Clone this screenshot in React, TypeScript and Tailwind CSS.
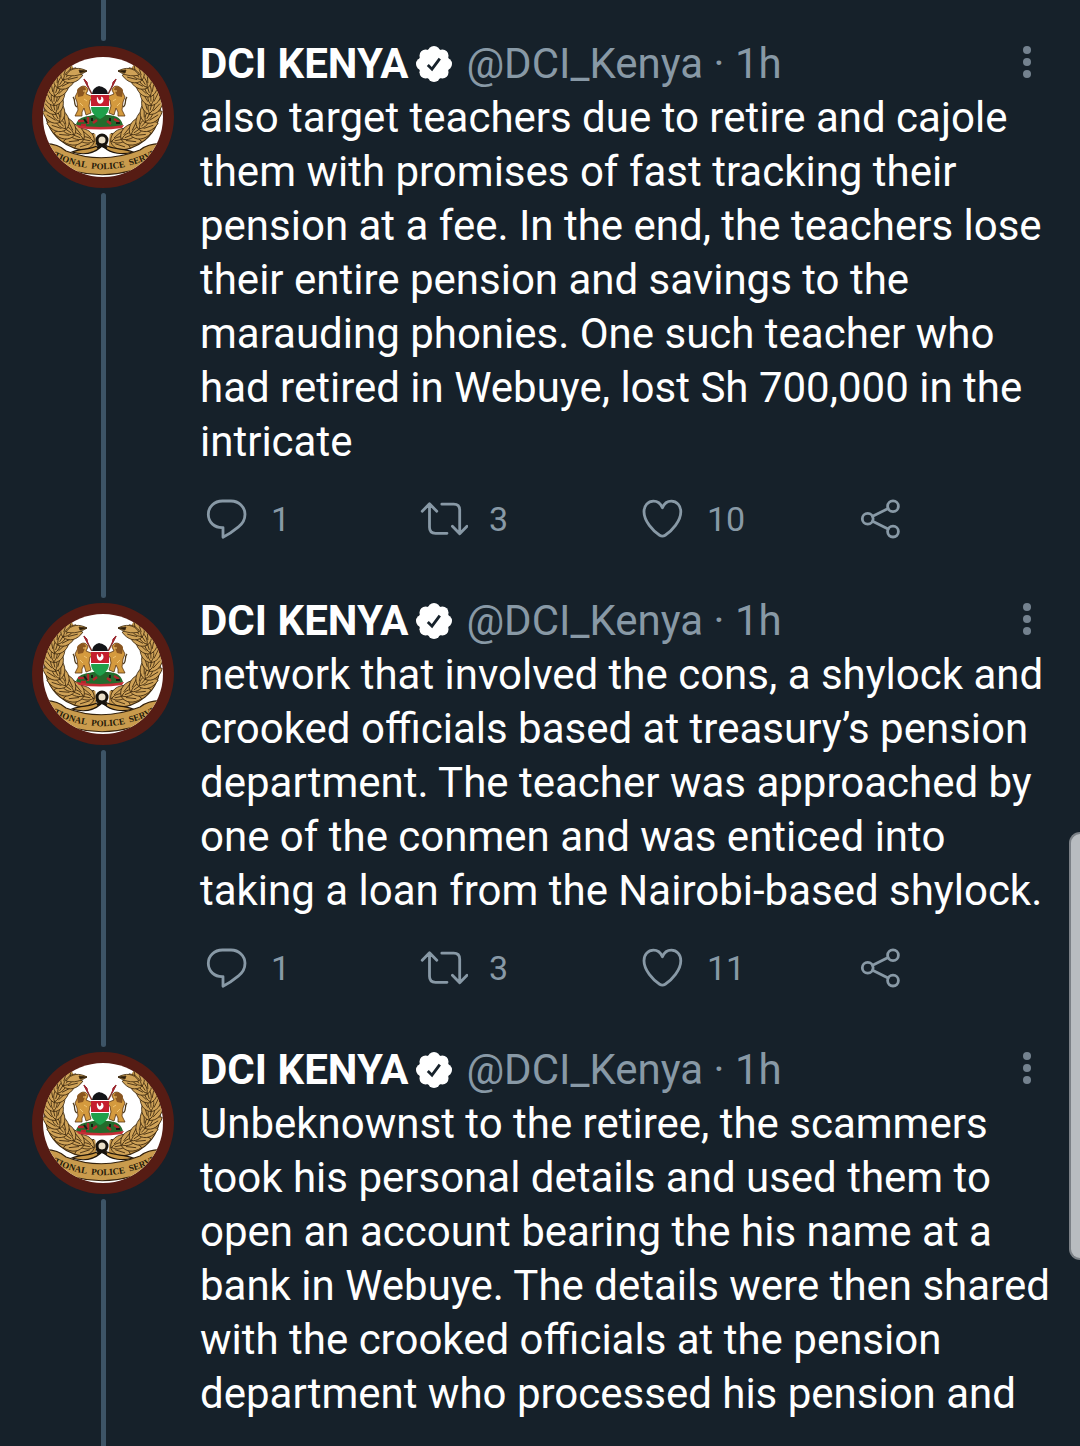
import { useId } from "react";

type Tweet = {
  id: number;
  text: string;
  replies?: number;
  retweets?: number;
  likes?: number;
};

const tweets: Tweet[] = [
  {
    id: 1,
    text: "also target teachers due to retire and cajole them with promises of fast tracking their pension at a fee. In the end, the teachers lose their entire pension and savings to the marauding phonies. One such teacher who had retired in Webuye, lost Sh 700,000 in the intricate",
    replies: 1,
    retweets: 3,
    likes: 10
  },
  {
    id: 2,
    text: "network that involved the cons, a shylock and crooked officials based at treasury’s pension department. The teacher was approached by one of the conmen and was enticed into taking a loan from the Nairobi-based shylock.",
    replies: 1,
    retweets: 3,
    likes: 11
  },
  {
    id: 3,
    text: "Unbeknownst to the retiree, the scammers took his personal details and used them to open an account bearing the his name at a bank in Webuye. The details were then shared with the crooked officials at the pension department who processed his pension and"
  }
];

// angles along one branch of the wreath, from the knot up to the tip
const branch = [14, 27, 40, 53, 66, 79, 92, 105, 118, 131];

function Branch() {
  return (
    <g fill="#cfa257" stroke="#3d290f" strokeWidth="0.8">
      <path d="M63 96C40 98 21 84 21 59C21 43 28 31 42 24" fill="none" stroke="#3d290f" strokeWidth="18" />
      <path d="M64 96C40 98 21 84 21 59C21 43 28 31 42 24" fill="none" stroke="#c4954a" strokeWidth="16" />
      {branch.map((deg) => {
        const a = (deg * Math.PI) / 180;
        const x = 70 - 48 * Math.sin(a);
        const y = 57 + 39 * Math.cos(a);
        const dir = (Math.atan2(-39 * Math.sin(a), -48 * Math.cos(a)) * 180) / Math.PI;
        return (
          <g key={deg} transform={`translate(${x} ${y}) rotate(${dir})`}>
            <path d="M-4 0C-3 -8 5 -12 14 -10C13 -4 6 0 -4 0ZM0 -3L9 -8" />
            <path d="M-4 0C-3 8 5 12 14 10C13 4 6 0 -4 0ZM0 3L9 8" />
            <path d="M-3 0C1 -4 9 -4 14 0C9 4 1 4 -3 0ZM0 0H9" />
          </g>
        );
      })}
      <path d="M34 29C39 21 48 21 55 25C49 29 42 31 34 29Z" />
      <path d="M47 24L55 25L48 27Z" fill="#2a1c0c" />
    </g>
  );
}

function Lion() {
  return (
    <g>
      <path
        d="M47 43C49 39 55 39 56 44L54 48L59 50L64 48L64 52L58 54L57 60L59 67L54 69L52 62L50 66L50 70L43 70L46 64L45 56L43 51Z"
        fill="#d49a3e"
        stroke="#5a3510"
        strokeWidth="0.8"
      />
      <path d="M45 44C47 40 52 39 54 43L51 50L46 51Z" fill="#8a5620" />
      <path d="M45 61C41 59 44 54 41 51" fill="none" stroke="#4a3617" strokeWidth="1.2" />
      <path d="M51 45H54M52 53L55 55M48 57L51 60" fill="none" stroke="#f1c673" strokeWidth="1" />
    </g>
  );
}

function Avatar() {
  const uid = useId();
  return (
    <svg viewBox="0 0 142 142" className="my-[5px] size-[142px] shrink-0" role="img" aria-label="DCI Kenya">
      <defs>
        <clipPath id={`${uid}clip`}>
          <circle cx="71" cy="71" r="60" />
        </clipPath>
        <path id={`${uid}arc`} d="M16 108Q71 139 128 107" />
      </defs>
      <circle cx="71" cy="71" r="71" fill="#561c14" />
      <circle cx="71" cy="71" r="60" fill="#fff" />
      <g clipPath={`url(#${uid}clip)`}>
        <Branch />
        <g transform="translate(141 0) scale(-1 1)">
          <Branch />
        </g>
        {/* ribbon tails and knot */}
        <path d="M67 99C59 104 50 102 40 106C50 109 61 108 69 101M73 99C82 104 91 102 101 106C91 109 79 108 72 101" fill="#c79645" stroke="#21160a" strokeWidth="1.2" />
        <ellipse cx="70" cy="94" rx="5" ry="5" fill="#eadfc8" stroke="#16120d" strokeWidth="3" />
        <path d="M65 102L75 97M64 97L75 102" stroke="#16120d" strokeWidth="2.5" />
        {/* banner */}
        <path d="M8 98Q24 96 34 105Q70 119 108 104Q118 96 134 98L128 113Q71 144 14 114Z" fill="#c99b4d" stroke="#33210c" strokeWidth="1.2" />
        <text fill="#241808" fontSize="9" fontWeight="700" fontFamily='"Liberation Serif", serif'>
          <textPath href={`#${uid}arc`} startOffset="50%" textAnchor="middle">
            TIONAL{"\u00a0"} POLICE{"\u00a0"} SERVI
          </textPath>
        </text>
      </g>
      {/* coat of arms */}
      <path d="M44 78C48 69 56 71 61 69H76C83 70 88 70 91 79L87 81H48Z" fill="#246b2c" />
      <path d="M46 75H52M56 71V78M82 73L87 76M61 77L65 74M75 75L79 78M49 79H54" stroke="#b3252b" strokeWidth="2.5" />
      <path d="M52 73L55 77M60 72V75M78 72V75M84 77H88" stroke="#161c14" strokeWidth="2" />
      <path d="M44 79Q68 83 92 79L90 82Q68 85 47 82Z" fill="#c52d36" />
      <path d="M52 33L64 56M84 33L72 56" stroke="#7c3228" strokeWidth="1.5" />
      <path d="M52 33L55 36L56 41ZM84 33L81 36L80 41Z" fill="#b92532" stroke="#9d2731" />
      <Lion />
      <g transform="translate(136 0) scale(-1 1)">
        <Lion />
      </g>
      <path d="M60 48C61 42 64 41 67 40C71 41 75 42 76 48Z" fill="#141518" />
      <path d="M59 48H77V60H59Z" fill="#c51f2e" />
      <path d="M59 61H77C77 67 72 71 68 73C64 71 59 67 59 61Z" fill="#1fa04b" />
      <path d="M59 60.5H77M59 48.5H77" stroke="#fff" strokeWidth="1.2" />
      <path d="M65 51C64 56 67 59 70 57C73 55 71 50 69 51C70 53 68 55 67 54C66 53 66 51 65 51Z" fill="#fff" />
    </svg>
  );
}

function VerifiedBadge() {
  return (
    <svg viewBox="0 0 36 36" className="ml-2 size-9 shrink-0" role="img" aria-label="Verified account">
      <g fill="#fff">
        <circle cx="18" cy="18" r="15.5" />
        {[0, 45, 90, 135, 180, 225, 270, 315].map((deg) => (
          <circle key={deg} cx="18" cy="6.2" r="6.2" transform={`rotate(${deg} 18 18)`} />
        ))}
      </g>
      <path d="M11.8 19L16 23.2L23.8 12.6" fill="none" stroke="#16212a" strokeWidth="2.8" />
    </svg>
  );
}

const icons = {
  reply: (
    <path d="M20.5 2H29C37 2 43 8 43 15.3C43 20.5 40.5 24.8 36.5 27.8C32 31.5 27 35.2 21 38.2V28.6C12.5 29 6.3 23.4 6.3 15.3C6.3 8 12 2 20.5 2Z" />
  ),
  retweet: (
    <path d="M2.2 12.3L9.5 4.8L16.8 12.3M9.5 5V28.3Q9.5 34.3 15.5 34.3H27M21.8 5.2H33.7Q39.7 5.2 39.7 11.2V34.5M32.4 27.2L39.7 34.7L47 27.2" />
  ),
  like: (
    <path d="M24.4 8.8C22.6 4.5 19.3 2.2 15.5 2.2C10 2.2 6 6.6 6 12.7C6 22 15 32 21.6 36.2Q24.4 38 27.2 36.2C33.8 32 42.8 22 42.8 12.7C42.8 6.6 38.8 2.2 33.3 2.2C29.5 2.2 26.2 4.5 24.4 8.8Z" />
  ),
  share: (
    <>
      <circle cx="11.7" cy="19.8" r="5.4" />
      <circle cx="37" cy="7.2" r="5.4" />
      <circle cx="37" cy="32.6" r="5.4" />
      <path d="M16.6 17.3L32.1 9.6M16.6 22.3L32.1 30.1" />
    </>
  )
};

function Action({ icon, label, count }: { icon: keyof typeof icons; label: string; count?: number }) {
  return (
    <button type="button" aria-label={label} className="flex h-10 items-center gap-[21px] text-[34px] leading-[42px]">
      <svg
        viewBox="0 0 48 40"
        className="h-10 w-12 shrink-0"
        fill="none"
        stroke="currentColor"
        strokeWidth="2.8"
        strokeLinecap="round"
        strokeLinejoin="round"
      >
        {icons[icon]}
      </svg>
      {count !== undefined && <span>{count}</span>}
    </button>
  );
}

function TweetItem({ tweet }: { tweet: Tweet }) {
  return (
    <article className="flex gap-[26px] pr-7 pl-8 last:grow">
      <div className="flex shrink-0 flex-col items-center">
        <div className="h-[41px] w-[5px] rounded-b-sm bg-[#3d5466]" />
        <Avatar />
        <div className="w-[5px] grow rounded-t-sm bg-[#3d5466]" />
      </div>

      <div className="min-w-0 grow pt-[37px] pb-[18px]">
        <header className="flex items-center text-[42px] leading-[54px] text-[#8899a6]">
          <h2 className="font-bold text-white">DCI KENYA</h2>
          <VerifiedBadge />
          <span className="ml-[14px] whitespace-nowrap">@DCI_Kenya · 1h</span>
          <button type="button" aria-label="More options" className="ml-auto px-5">
            <svg viewBox="0 0 10 36" className="h-9 w-[10px]" fill="#74828f">
              <circle cx="5" cy="4" r="4" />
              <circle cx="5" cy="16" r="4" />
              <circle cx="5" cy="28" r="4" />
            </svg>
          </button>
        </header>

        <p className="text-[42px] leading-[54px] text-white">{tweet.text}</p>

        {tweet.likes !== undefined && (
          <div className="mt-[30px] grid grid-cols-[1fr_1fr_1fr_auto] pr-[148px] pl-[2px] text-[#8899a6]">
            <Action icon="reply" label="Reply" count={tweet.replies} />
            <Action icon="retweet" label="Retweet" count={tweet.retweets} />
            <Action icon="like" label="Like" count={tweet.likes} />
            <Action icon="share" label="Share" />
          </div>
        )}
      </div>
    </article>
  );
}

export default function App() {
  return (
    <main className="relative flex min-h-screen flex-col overflow-hidden bg-[#16212a] font-[Roboto,sans-serif]">
      {/* edge panel handle */}
      <div className="absolute top-[832px] right-0 h-[428px] w-[11px] rounded-l-xl border-2 border-r-0 border-[#7b8086] bg-[#b8bcc0]" />
      {tweets.map((tweet) => (
        <TweetItem key={tweet.id} tweet={tweet} />
      ))}
    </main>
  );
}
